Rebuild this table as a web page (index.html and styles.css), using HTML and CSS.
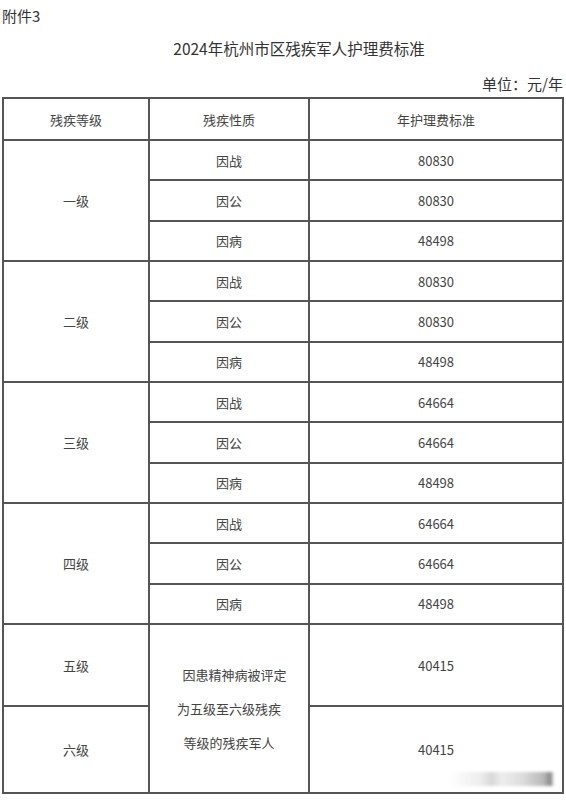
FILE: index.html
```html
<!DOCTYPE html>
<html lang="zh-CN">
<head>
<meta charset="utf-8">
<title>2024年杭州市区残疾军人护理费标准</title>
<link rel="stylesheet" href="styles.css">
</head>
<body>
<div class="page">
  <div class="attach">附件3</div>
  <h1 class="title">2024年杭州市区残疾军人护理费标准</h1>
  <div class="unit">单位：元/年</div>
  <table class="grid">
    <colgroup>
      <col class="c1"><col class="c2"><col class="c3">
    </colgroup>
    <thead>
      <tr class="head"><th>残疾等级</th><th>残疾性质</th><th>年护理费标准</th></tr>
    </thead>
    <tbody>
      <tr class="r"><td rowspan="3">一级</td><td>因战</td><td>80830</td></tr>
      <tr class="r"><td>因公</td><td>80830</td></tr>
      <tr class="r"><td>因病</td><td>48498</td></tr>
      <tr class="r"><td rowspan="3">二级</td><td>因战</td><td>80830</td></tr>
      <tr class="r"><td>因公</td><td>80830</td></tr>
      <tr class="r"><td>因病</td><td>48498</td></tr>
      <tr class="r"><td rowspan="3">三级</td><td>因战</td><td>64664</td></tr>
      <tr class="r"><td>因公</td><td>64664</td></tr>
      <tr class="r"><td>因病</td><td>48498</td></tr>
      <tr class="r"><td rowspan="3">四级</td><td>因战</td><td>64664</td></tr>
      <tr class="r"><td>因公</td><td>64664</td></tr>
      <tr class="r"><td>因病</td><td>48498</td></tr>
      <tr class="r5"><td>五级</td><td rowspan="2" class="note"><span class="l1">因患精神病被评定</span><br>为五级至六级残疾<br>等级的残疾军人</td><td>40415</td></tr>
      <tr class="r6"><td>六级</td><td class="last">40415<span class="mark"></span></td></tr>
    </tbody>
  </table>
</div>
</body>
</html>
```
FILE: styles.css
```css
html, body {
  margin: 0;
  padding: 0;
  background: #fff;
}
body {
  font-family: "Noto Sans CJK SC", "Noto Sans", sans-serif;
  color: #444;
}
.page {
  width: 566px;
  padding: 4px 0 0 2px;
  box-sizing: border-box;
}
.attach {
  font-size: 15px;
  line-height: 24px;
  color: #333;
}
.title {
  margin: 8px 0 0;
  padding-left: 30px;
  font-size: 15.5px;
  font-weight: normal;
  line-height: 24px;
  text-align: center;
  color: #333;
}
.unit {
  margin-top: 12px;
  font-size: 15px;
  line-height: 24px;
  text-align: right;
  padding-right: 3px;
  color: #333;
}
.grid {
  margin-top: 1px;
  border-collapse: collapse;
  table-layout: fixed;
  width: 560px;
  font-size: 13px;
}
.c1 { width: 146px; }
.c2 { width: 160px; }
.c3 { width: 254px; }
.grid th, .grid td {
  border: 2px solid #555;
  padding: 0;
  text-align: center;
  vertical-align: middle;
  font-weight: normal;
  color: #444;
}
.head { height: 42px; }
.r { height: 40.35px; }
.r5 { height: 82px; }
.r6 { height: 87px; }
.note {
  line-height: 34px;
  padding-top: 0;
}
.l1 { padding-left: 11px; }
.last { position: relative; }
.mark {
  position: absolute;
  right: 8px;
  bottom: 6px;
  width: 104px;
  height: 14px;
  background: linear-gradient(90deg, rgba(255,255,255,0) 0%, #ececec 30%, #d8d8d8 40%, #ededed 50%, #dcdcdc 70%, #b8b8b8 90%, #888 97%, rgba(255,255,255,0) 100%);
  filter: blur(1.5px);
}
```
